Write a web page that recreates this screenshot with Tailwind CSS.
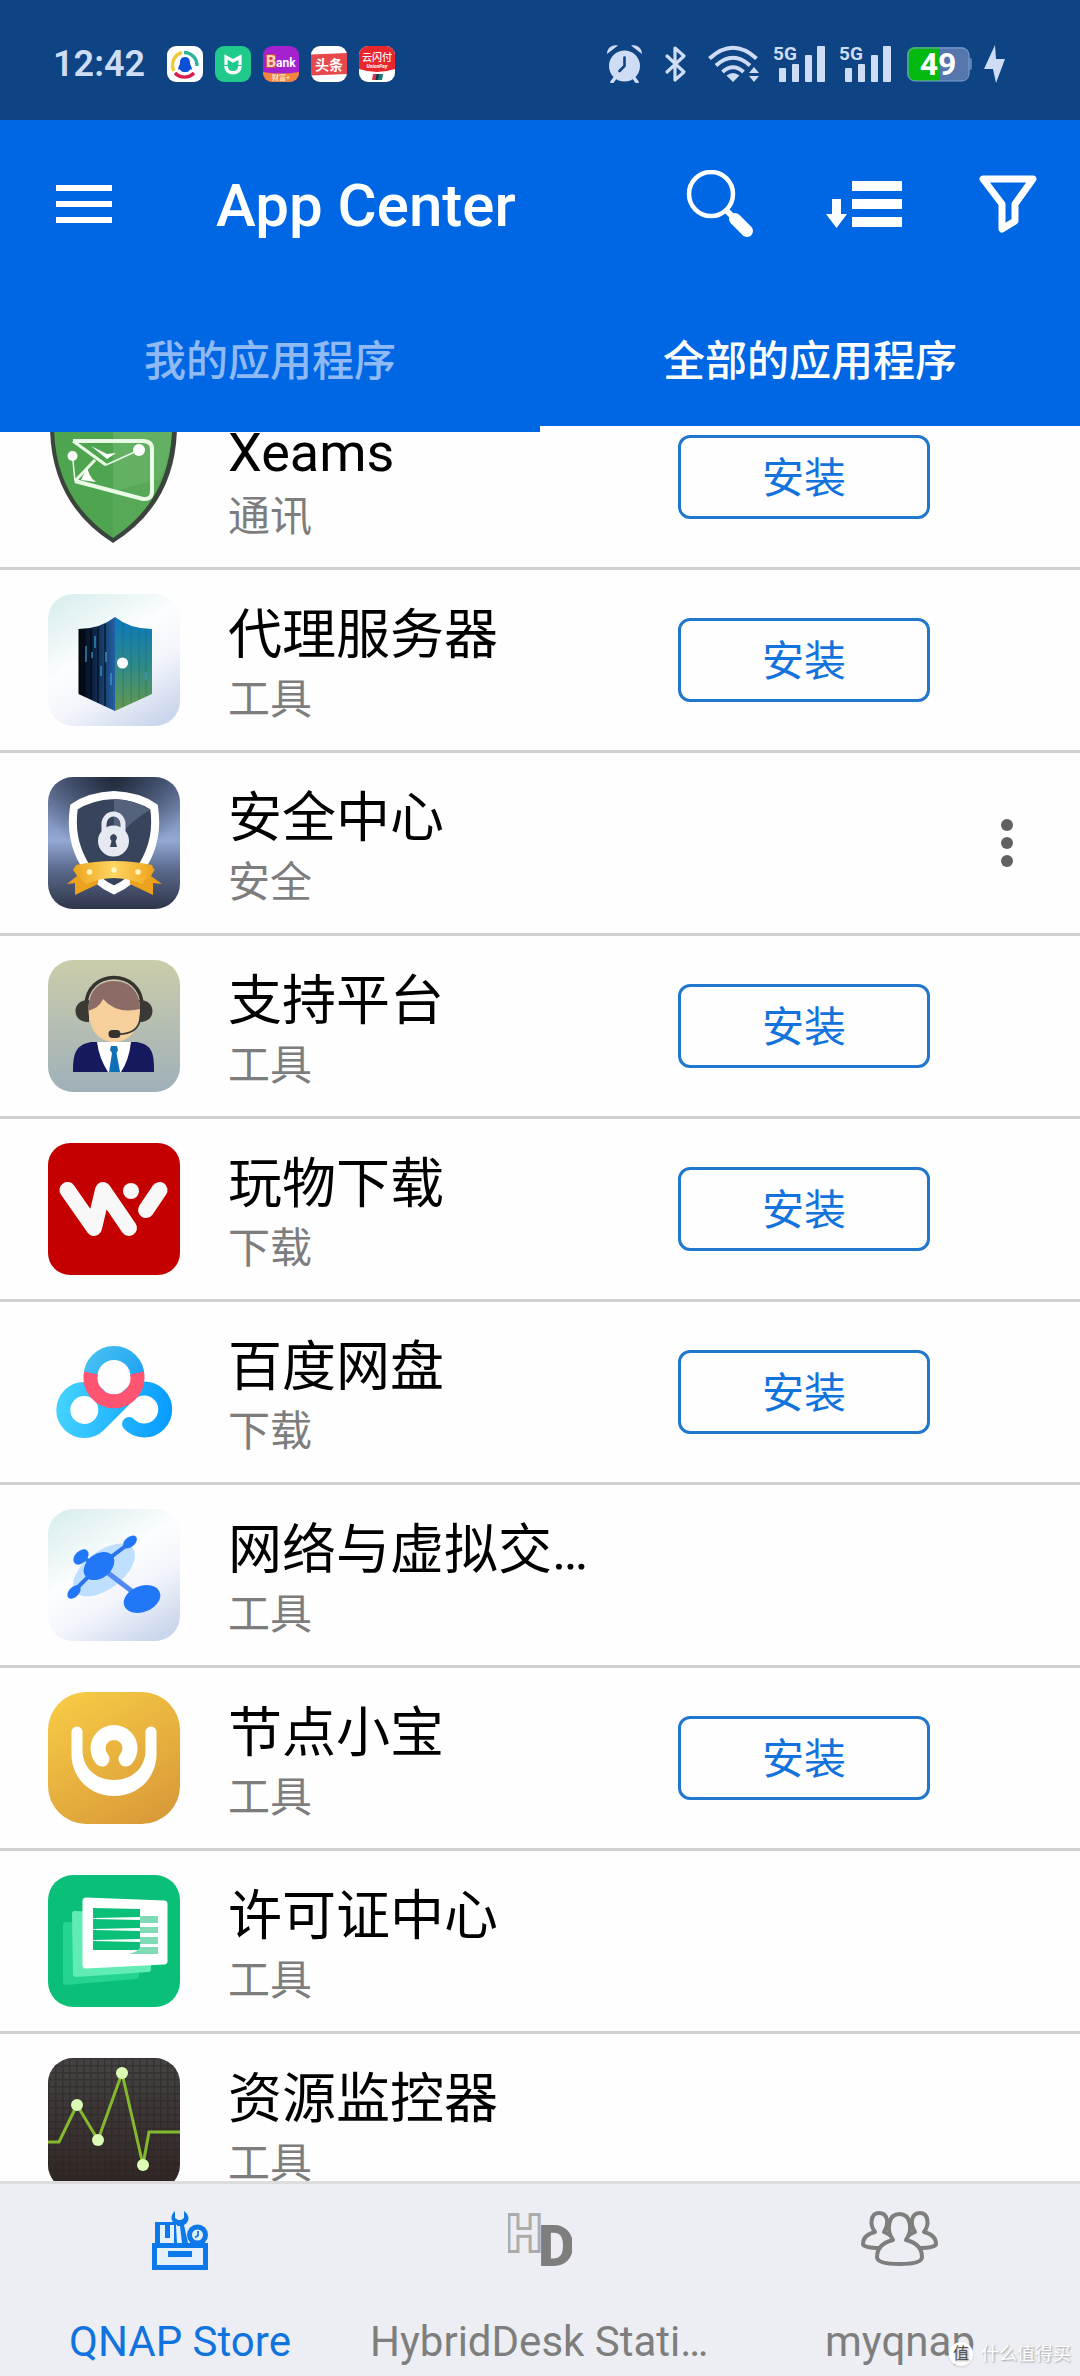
<!DOCTYPE html>
<html lang="zh-CN">

<head>
  <meta charset="UTF-8" />
  <meta name="viewport" content="width=device-width, initial-scale=1.0" />
  <title>App Center</title>
  <script src="https://cdn.jsdelivr.net/npm/@tailwindcss/browser@4"></script>
</head>

<body class="bg-white">
  <div class="relative w-full h-screen flex flex-col overflow-hidden font-[Roboto,'Noto_Sans_CJK_SC',sans-serif]">
    <!-- status bar -->
    <div class="flex shrink-0 items-center justify-between h-[120px] pt-2 pl-[53px] pr-[75px] bg-[#0e4384] text-[#cfdcf5]">
      <div class="flex items-center gap-[22px]">
        <span class="text-4xl font-semibold">12:42</span>
        <div class="flex items-center gap-3">
          <svg class="size-9" viewBox="0 0 36 36">
            <rect width="36" height="36" rx="9" fill="#fff" />
            <g fill="none" stroke-width="3.4">
              <path d="M7 25A13 13 0 0 1 15 6.500" stroke="#f0c93c" />
              <path d="M17 6.500A13 13 0 0 1 30 20" stroke="#2fb39a" />
              <path d="M8 27A13 13 0 0 0 27 27" stroke="#d81e4c" />
            </g>
            <path d="M18 11c4 0 5 3 5 6 0 2 2 4 2 6.500h-2c-1 2-2 2.500-5 2.500s-4-.5-5-2.500h-2c0-2.500 2-4.500 2-6.500 0-3 1-6 5-6z" fill="#0b51d8" />
          </svg>
          <svg class="size-9" viewBox="0 0 36 36">
            <rect width="36" height="36" rx="9" fill="#1fca8a" />
            <path d="M11 19V11l7 4 7-4v8" fill="none" stroke="#fff" stroke-width="3.2" />
            <path d="M11 20c0 9 14 9 14 0" fill="none" stroke="#fff" stroke-width="3.6" />
          </svg>
          <svg class="size-9" viewBox="0 0 36 36">
            <clipPath id="c-bank"><rect width="36" height="36" rx="9" /></clipPath>
            <g clip-path="url(#c-bank)">
              <rect width="36" height="36" fill="#a321cf" />
              <path d="M0 26q18 3 36 0v10H0z" fill="#f0873c" />
              <rect x="3" y="8" width="10" height="14" fill="#e0453c" />
              <text x="3" y="21" font-size="16" font-weight="700" fill="#ffd9c0">B</text>
              <text x="13" y="21" font-size="12" font-weight="700" fill="#fff">ank</text>
              <text x="18" y="34" font-size="7" text-anchor="middle" fill="#fff">财富+</text>
            </g>
          </svg>
          <svg class="size-9" viewBox="0 0 36 36">
            <rect width="36" height="36" rx="9" fill="#fff" />
            <path d="M0 8.500L36 7v21L0 29.500z" fill="#e8484c" />
            <text x="18" y="24" font-size="14" font-weight="700" text-anchor="middle" fill="#fff">头条</text>
          </svg>
          <svg class="size-9" viewBox="0 0 36 36">
            <clipPath id="c-pay"><rect width="36" height="36" rx="9" /></clipPath>
            <g clip-path="url(#c-pay)">
              <rect width="36" height="36" fill="#fff" />
              <path d="M0 0h36v23q-18 6-36 0z" fill="#e8262c" />
              <text x="18" y="15" font-size="10" font-weight="500" text-anchor="middle" fill="#fff">云闪付</text>
              <text x="18" y="22" font-size="5" font-style="italic" font-weight="700" text-anchor="middle" fill="#fff">UnionPay</text>
              <path d="M14 28h4l-1 6h-4z" fill="#d3384a" /><path d="M17.500 28h3l-1 6h-3z" fill="#17304f" /><path d="M20 28h4l-1 6h-4z" fill="#147a70" />
            </g>
          </svg>
        </div>
      </div>
      <div class="flex items-center gap-3">
        <svg class="w-[38px] h-[38px]" viewBox="0 0 38 38" fill="#cfdcf5">
          <circle cx="18.500" cy="21" r="15.500" />
          <path d="M1 9c0-6 5-10 11-8.500zM36 9c0-6-5-10-11-8.500z" />
          <path d="M9 33l-3 4M28 33l3 4" stroke="#cfdcf5" stroke-width="3.500" stroke-linecap="round" />
          <path d="M18.500 12.500v8.500l-5 5" fill="none" stroke="#0e4384" stroke-width="2.600" stroke-linecap="round" />
        </svg>
        <svg class="w-10 h-[38px]" viewBox="0 0 40 38" fill="none" stroke="#cfdcf5" stroke-width="3.200" stroke-linejoin="round" stroke-linecap="round">
          <path d="M11 11l17 16-9 8V3l9 8L11 27" />
        </svg>
        <svg class="w-[54px] h-[38px]" viewBox="0 0 54 38" fill="none" stroke="#cfdcf5" stroke-width="4">
          <path d="M1.500 13.500Q25 -8 48.500 13.500M8 20.500Q25 5 42 20.500M14.500 27Q25 17.500 35.500 27" />
          <path d="M25 37l-6.500-6.500q6.500-5 13 0z" fill="#cfdcf5" stroke="none" />
          <path d="M46 22l5 6H41zM46 37l5-6H41z" fill="#cfdcf5" stroke="none" />
        </svg>
        <svg class="w-[54px] h-[38px] overflow-visible" viewBox="0 0 54 38" fill="#cfdcf5">
          <text x="-1" y="15" font-size="19" font-weight="700">5G</text>
          <rect x="5" y="23" width="7" height="14" rx="1" /><rect x="18" y="19" width="7" height="18" rx="1" /><rect x="31" y="10" width="7" height="27" rx="1" /><rect x="43" y="1" width="8" height="36" rx="1" />
        </svg>
        <svg class="w-[54px] h-[38px] overflow-visible" viewBox="0 0 54 38" fill="#cfdcf5">
          <text x="-1" y="15" font-size="19" font-weight="700">5G</text>
          <rect x="5" y="23" width="7" height="14" rx="1" /><rect x="18" y="19" width="7" height="18" rx="1" /><rect x="31" y="10" width="7" height="27" rx="1" /><rect x="43" y="1" width="8" height="36" rx="1" />
        </svg>
        <svg class="w-[66px] h-[38px]" viewBox="0 0 66 38">
          <clipPath id="c-bat"><rect x="1" y="2" width="62" height="34" rx="8" /></clipPath>
          <rect x="61" y="13" width="5" height="12" rx="2" fill="#5b7fb3" />
          <g clip-path="url(#c-bat)">
            <rect width="66" height="38" fill="#5577ad" /><rect width="34" height="38" fill="#04b90f" />
          </g>
          <rect x="2" y="3" width="61" height="33" rx="7" fill="none" stroke="#7f9fd0" />
          <text x="32" y="30" font-size="32" font-weight="700" text-anchor="middle" fill="#fff">49</text>
        </svg>
        <svg class="w-[21px] h-[38px]" viewBox="0 0 21 38" fill="#cfdcf5"><path d="M11 0L0 24h9l3 14 9-24h-9z" /></svg>
      </div>
    </div>

    <!-- title bar and tabs -->
    <header class="shrink-0 bg-[#0067e4] text-white">
      <div class="flex items-center h-[168px]">
        <button class="flex w-[168px] h-full items-center justify-center" aria-label="菜单">
          <svg class="w-14 h-[38px]" viewBox="0 0 56 38" fill="#fff"><path d="M0 0h56v6H0zM0 16h56v6H0zM0 32h56v6H0z" /></svg>
        </button>
        <h1 class="flex-1 pl-12 pt-1 text-[60px] leading-[72px] font-medium">App Center</h1>
        <button class="flex w-36 h-full items-center justify-center" aria-label="搜索">
          <svg class="w-[68px] h-[68px]" viewBox="0 0 68 68" fill="none" stroke="#fff">
            <circle cx="25" cy="24" r="22" stroke-width="4.500" />
            <path d="M40 40l6 6" stroke-width="6" />
            <path d="M49 49l12 12" stroke-width="12" stroke-linecap="round" />
          </svg>
        </button>
        <button class="flex w-36 h-full items-center justify-center" aria-label="排序">
          <svg class="w-[76px] h-[48px]" viewBox="0 0 76 48" fill="#fff"><path d="M26 1h50v10H26zM26 19h50v10H26zM26 37h50v10H26zM6 19h9v15h6L10.500 48 0 34h6z" /></svg>
        </button>
        <button class="flex w-36 h-full items-center justify-center" aria-label="筛选">
          <svg class="w-[58px] h-[58px]" viewBox="0 0 58 58" fill="none" stroke="#fff" stroke-width="7" stroke-linejoin="round"><path d="M4 4h50L36 29v17l-13 8V29z" /></svg>
        </button>
      </div>
      <nav class="grid grid-cols-2 h-[144px] text-[42px] font-medium">
        <a href="#" class="flex items-center justify-center border-b-6 border-transparent pt-[9px] text-[#8fbaf5]">我的应用程序</a>
        <a href="#" class="flex items-center justify-center border-b-6 border-white pt-[9px]">全部的应用程序</a>
      </nav>
    </header>

    <!-- app list, scrolled part of a row down -->
    <main class="flex-1 min-h-0 overflow-hidden bg-[#fefefe]">
      <ul class="-mt-[45px] text-black">
        <li class="flex items-center h-[183px] border-b-3 border-[#d0d2d2] pl-12">
          <svg class="size-[132px] shrink-0" viewBox="0 0 132 132">
            <path d="M65 132Q2 92 2 14L65 0l64 14Q129 92 65 132z" fill="#3b443c" />
            <path d="M65 127Q6 88 6 14L65 2z" fill="#4fa44f" />
            <path d="M65 127Q124 88 124 14L65 2z" fill="#57a857" />
            <path d="M65 2L124 14q0 30-12 54L65 80z" fill="#63b062" />
            <g fill="none" stroke="#e9fbe6" stroke-linejoin="round">
              <path d="M25 30H95q9 0 9 8v42q0 9-9 8L27 70" stroke-width="4" />
              <path d="M25 30L58 54" stroke-width="3" />
              <path d="M58 54L91 39M24.500 45L27 70" stroke-width="1.500" />
              <path d="M27 70L47 49" stroke-width="3" />
            </g>
            <path d="M43 35l16 8 9-1-9 6zM39.500 56L33 69l15 2q-8-6-8.500-15z" fill="#fff" />
            <circle cx="24.500" cy="45" r="5" fill="#fff" /><circle cx="91" cy="39" r="6" fill="#fff" />
          </svg>
          <div class="flex-1 min-w-0 pl-12 pt-2">
            <h2 class="text-[54px] leading-[72px] truncate max-w-[360px]">Xeams</h2>
            <p class="text-[42px] leading-[56px] text-[#7d7d7d]">通讯</p>
          </div>
          <button class="w-[252px] h-[84px] mr-[150px] rounded-xl border-3 border-[#2177cb] pt-[3px] text-[42px] leading-[56px] text-[#1273dc]">安装</button>
        </li>
        <li class="flex items-center h-[183px] border-b-3 border-[#d0d2d2] pl-12">
          <svg class="size-[132px] shrink-0" viewBox="0 0 132 132">
            <defs>
              <linearGradient id="g-pale" x1="0.200" y1="0" x2="0.800" y2="1"><stop offset="0" stop-color="#dcefef" /><stop offset=".4" stop-color="#fcfdfe" /><stop offset=".65" stop-color="#f3f5fb" /><stop offset="1" stop-color="#cad6ec" /></linearGradient>
              <linearGradient id="g-pl"><stop offset="0" stop-color="#02060d" /><stop offset=".4" stop-color="#0c2240" /><stop offset="1" stop-color="#2360a4" /></linearGradient>
              <linearGradient id="g-pr" x1="0" y1="0" x2="0" y2="1"><stop offset="0" stop-color="#0a78c0" /><stop offset=".5" stop-color="#2d8a8c" /><stop offset="1" stop-color="#66994a" /></linearGradient>
            </defs>
            <rect width="132" height="132" rx="25" fill="url(#g-pale)" />
            <path d="M30.500 35Q52 35 67 23v94L30.500 100z" fill="url(#g-pl)" />
            <path d="M67 23q15 12 37 12v65L67 117z" fill="url(#g-pr)" />
            <path d="M36 36v66M43 35v70M50 33v76M57 30v82" stroke="#000" stroke-width="2" opacity=".45" />
            <path d="M75 29v84M83 33v75M91 35v70M98 36v66" stroke="#1d5d56" stroke-width="1" opacity=".4" />
            <path d="M38 52v16M47 42v12M58 58v10M53 72v10M63 79v12M98 78v8M44 58v6" stroke="#3f9fd0" stroke-width="2" opacity=".6" />
            <circle cx="74.500" cy="69" r="5.500" fill="#fff" />
          </svg>
          <div class="flex-1 min-w-0 pl-12 pt-2">
            <h2 class="text-[54px] leading-[72px] truncate max-w-[360px]">代理服务器</h2>
            <p class="text-[42px] leading-[56px] text-[#7d7d7d]">工具</p>
          </div>
          <button class="w-[252px] h-[84px] mr-[150px] rounded-xl border-3 border-[#2177cb] pt-[3px] text-[42px] leading-[56px] text-[#1273dc]">安装</button>
        </li>
        <li class="flex items-center h-[183px] border-b-3 border-[#d0d2d2] pl-12">
          <svg class="size-[132px] shrink-0" viewBox="0 0 132 132">
            <defs>
              <linearGradient id="g-sec" x1="0" y1="0" x2="0" y2="1"><stop offset="0" stop-color="#56678c" /><stop offset=".48" stop-color="#93a9d4" /><stop offset=".7" stop-color="#5b6a8d" /><stop offset="1" stop-color="#2f3649" /></linearGradient>
              <radialGradient id="g-sec2" cx=".5" cy="0" r=".6"><stop offset="0" stop-color="#20293a" /><stop offset="1" stop-color="#20293a" stop-opacity="0" /></radialGradient>
              <linearGradient id="g-rib"><stop offset="0" stop-color="#eda41d" /><stop offset=".5" stop-color="#ffd561" /><stop offset="1" stop-color="#eda41d" /></linearGradient>
            </defs>
            <rect width="132" height="132" rx="25" fill="url(#g-sec)" />
            <rect width="132" height="132" rx="25" fill="url(#g-sec2)" />
            <path d="M66 18Q42 19 26 30Q21 62 37 88Q48 105 66 113Q84 105 95 88Q111 62 106 30Q90 19 66 18z" fill="#38445c" stroke="#fff" stroke-width="8" />
            <path d="M66 22q21 1 36 11-15 8-36 30z" fill="#55627c" />
            <path d="M56 54V47a9.500 10 0 0 1 19 0v7" fill="none" stroke="#e6e9f2" stroke-width="5" />
            <circle cx="65.500" cy="64" r="15.500" fill="#e6e9f2" />
            <path d="M65.500 57a4 4 0 0 1 2 7l1.500 6h-7l1.500-6a4 4 0 0 1 2-7z" fill="#38445c" />
            <path d="M25 92l4 7-10 8 8-1v12l23-11 1-14zM107 92l-4 7 11 8-9-1v12l-23-11-1-14z" fill="#eca21d" />
            <path d="M28 88Q66 80 104 88l2 5-12 14q-28-12-56 0L25 93z" fill="url(#g-rib)" />
            <circle cx="41.500" cy="95" r="2.800" fill="#fff3c0" /><circle cx="66" cy="93" r="2.800" fill="#fff3c0" /><circle cx="90" cy="95" r="2.800" fill="#fff3c0" />
          </svg>
          <div class="flex-1 min-w-0 pl-12 pt-2">
            <h2 class="text-[54px] leading-[72px] truncate max-w-[360px]">安全中心</h2>
            <p class="text-[42px] leading-[56px] text-[#7d7d7d]">安全</p>
          </div>
          <button class="flex w-[146px] h-full items-center justify-center" aria-label="更多">
            <svg class="w-3 h-12" viewBox="0 0 12 48" fill="#616161"><circle cx="6" cy="6" r="6" /><circle cx="6" cy="24" r="6" /><circle cx="6" cy="42" r="6" /></svg>
          </button>
        </li>
        <li class="flex items-center h-[183px] border-b-3 border-[#d0d2d2] pl-12">
          <svg class="size-[132px] shrink-0" viewBox="0 0 132 132">
            <defs>
              <linearGradient id="g-sup" x1="0" y1="0" x2="0" y2="1"><stop offset="0" stop-color="#cbcca9" /><stop offset="1" stop-color="#9fb0b9" /></linearGradient>
              <clipPath id="c-face"><path d="M66 21c17 0 26 12 26 28 0 18-9 33-26 33S40.500 67 40.500 49C40.500 33 49 21 66 21z" /></clipPath>
            </defs>
            <rect width="132" height="132" rx="25" fill="url(#g-sup)" />
            <path d="M25 112c0-18 2-27 18-30h46c16 3 17 12 17 30z" fill="#17195f" />
            <path d="M49 82h34q-2 18-10 30H60Q51 98 49 82z" fill="#fff" />
            <path d="M63 86h6l1 4-1.500 3 3.500 19H61l3-19-2-3z" fill="#0f70b5" />
            <path d="M38 46c0-38 56-38 56 0" fill="none" stroke="#35342f" stroke-width="3.500" />
            <path d="M41 40v22c-18 1-18-23 0-22zM91 40v22c18 1 18-23 0-22z" fill="#3a3935" />
            <g clip-path="url(#c-face)">
              <rect x="38" y="20" width="58" height="64" fill="#f6cf9b" />
              <path d="M38 18h58v30q-26 8-41-9-4 10-17 12z" fill="#8b6b66" />
            </g>
            <path d="M92 60q-3 14-21 14" fill="none" stroke="#3a3935" stroke-width="1.600" />
            <rect x="60.500" y="70" width="12" height="8" rx="4" fill="#33322e" />
          </svg>
          <div class="flex-1 min-w-0 pl-12 pt-2">
            <h2 class="text-[54px] leading-[72px] truncate max-w-[360px]">支持平台</h2>
            <p class="text-[42px] leading-[56px] text-[#7d7d7d]">工具</p>
          </div>
          <button class="w-[252px] h-[84px] mr-[150px] rounded-xl border-3 border-[#2177cb] pt-[3px] text-[42px] leading-[56px] text-[#1273dc]">安装</button>
        </li>
        <li class="flex items-center h-[183px] border-b-3 border-[#d0d2d2] pl-12">
          <svg class="size-[132px] shrink-0" viewBox="0 0 132 132">
            <rect width="132" height="132" rx="22" fill="#c40000" />
            <g fill="none" stroke="#f8f8f8" stroke-width="16" stroke-linecap="round" stroke-linejoin="round">
              <path d="M19.500 47L46 85l9-38 26 38" /><path d="M111.500 47L98 67" />
            </g>
            <circle cx="83" cy="48" r="8" fill="#f8f8f8" />
          </svg>
          <div class="flex-1 min-w-0 pl-12 pt-2">
            <h2 class="text-[54px] leading-[72px] truncate max-w-[360px]">玩物下载</h2>
            <p class="text-[42px] leading-[56px] text-[#7d7d7d]">下载</p>
          </div>
          <button class="w-[252px] h-[84px] mr-[150px] rounded-xl border-3 border-[#2177cb] pt-[3px] text-[42px] leading-[56px] text-[#1273dc]">安装</button>
        </li>
        <li class="flex items-center h-[183px] border-b-3 border-[#d0d2d2] pl-12">
          <svg class="size-[132px] shrink-0" viewBox="0 0 132 132" fill="none">
            <defs>
              <linearGradient id="g-bd" gradientUnits="userSpaceOnUse" x1="8" y1="70" x2="124" y2="84"><stop offset="0" stop-color="#45d4ff" /><stop offset="1" stop-color="#089bff" /></linearGradient>
              <linearGradient id="g-bd2" gradientUnits="userSpaceOnUse" x1="36" y1="20" x2="96" y2="50"><stop offset="0" stop-color="#4cc4f2" /><stop offset="1" stop-color="#1fa2f2" /></linearGradient>
            </defs>
            <path d="M81 98A21 21 0 1 0 81 69L51 99A21 21 0 1 1 51 69A21 21 0 0 1 51 99" stroke="url(#g-bd)" stroke-width="14" stroke-linecap="round" stroke-linejoin="round" />
            <path d="M42.500 50.500a23.500 23.500 0 0 1 47 0" stroke="url(#g-bd2)" stroke-width="14" />
            <path d="M43 47a23.500 23.500 0 1 0 46 0" stroke="#ff5573" stroke-width="14" />
          </svg>
          <div class="flex-1 min-w-0 pl-12 pt-2">
            <h2 class="text-[54px] leading-[72px] truncate max-w-[360px]">百度网盘</h2>
            <p class="text-[42px] leading-[56px] text-[#7d7d7d]">下载</p>
          </div>
          <button class="w-[252px] h-[84px] mr-[150px] rounded-xl border-3 border-[#2177cb] pt-[3px] text-[42px] leading-[56px] text-[#1273dc]">安装</button>
        </li>
        <li class="flex items-center h-[183px] border-b-3 border-[#d0d2d2] pl-12">
          <svg class="size-[132px] shrink-0" viewBox="0 0 132 132" fill="#2277f8">
            <rect width="132" height="132" rx="25" fill="url(#g-pale)" />
            <ellipse cx="56" cy="61" rx="36" ry="19" transform="rotate(-37 56 61)" fill="#bfdffe" />
            <path d="M51 57L94 90" stroke="#5289f3" stroke-width="5" />
            <path d="M83 33L51 57 25 83M33 48l18 9" stroke="#2c74ea" stroke-width="4" />
            <ellipse cx="51" cy="57" rx="17" ry="12" transform="rotate(-38 51 57)" />
            <ellipse cx="94" cy="90" rx="19" ry="13" transform="rotate(-22 94 90)" />
            <ellipse cx="82" cy="33" rx="8" ry="5" transform="rotate(-40 82 33)" />
            <ellipse cx="33" cy="48" rx="9" ry="6" transform="rotate(-45 33 48)" />
            <ellipse cx="26" cy="83" rx="8" ry="5" transform="rotate(-45 26 83)" />
          </svg>
          <div class="flex-1 min-w-0 pl-12 pt-2">
            <h2 class="text-[54px] leading-[72px] truncate max-w-[372px]">网络与虚拟交换机</h2>
            <p class="text-[42px] leading-[56px] text-[#7d7d7d]">工具</p>
          </div>
        </li>
        <li class="flex items-center h-[183px] border-b-3 border-[#d0d2d2] pl-12">
          <svg class="size-[132px] shrink-0" viewBox="0 0 132 132">
            <linearGradient id="g-node" x1="0.200" y1="0" x2="0.800" y2="1"><stop offset="0" stop-color="#f6c945" /><stop offset="1" stop-color="#d99a38" /></linearGradient>
            <rect width="132" height="132" rx="38" fill="url(#g-node)" />
            <path d="M23.500 40a5.500 5.500 0 0 1 11 0V58C34.500 76 48 88 66 88S97.500 76 97.500 58V40a5.500 5.500 0 0 1 11 0V62C108.500 86 90 104 66 104S23.500 86 23.500 62z" fill="#fff" />
            <path d="M54 67A16 16 0 1 1 78 67" fill="none" stroke="#fff" stroke-width="15" stroke-linecap="round" />
          </svg>
          <div class="flex-1 min-w-0 pl-12 pt-2">
            <h2 class="text-[54px] leading-[72px] truncate max-w-[360px]">节点小宝</h2>
            <p class="text-[42px] leading-[56px] text-[#7d7d7d]">工具</p>
          </div>
          <button class="w-[252px] h-[84px] mr-[150px] rounded-xl border-3 border-[#2177cb] pt-[3px] text-[42px] leading-[56px] text-[#1273dc]">安装</button>
        </li>
        <li class="flex items-center h-[183px] border-b-3 border-[#d0d2d2] pl-12">
          <svg class="size-[132px] shrink-0" viewBox="0 0 132 132" stroke-linejoin="round">
            <rect width="132" height="132" rx="25" fill="#0abf78" />
            <path d="M18 50l70 4v47l-70 6z" fill="#25d48e" stroke="#25d48e" stroke-width="6" />
            <path d="M27 39l73 4v51l-72 5z" fill="#60ecb4" stroke="#60ecb4" stroke-width="6" />
            <path d="M38 26l78 3v57l-78 4z" fill="#fff" stroke="#fff" stroke-width="7" />
            <path d="M45 33l47 1v8l-47 1zM45 44l47 1v8l-47 1zM45 55l47 1v8l-47 1zM45 66l47 1v8H45z" fill="#0abf78" />
            <path d="M92 41h18v7H92zM92 52h18v6H92zM92 62h18v7H92zM92 72h18v7H81q10-3 11-7z" fill="#7fdbb6" />
          </svg>
          <div class="flex-1 min-w-0 pl-12 pt-2">
            <h2 class="text-[54px] leading-[72px] truncate max-w-[360px]">许可证中心</h2>
            <p class="text-[42px] leading-[56px] text-[#7d7d7d]">工具</p>
          </div>
        </li>
        <li class="flex items-center h-[183px] border-b-3 border-[#d0d2d2] pl-12">
          <svg class="size-[132px] shrink-0" viewBox="0 0 132 132">
            <defs>
              <pattern id="p-grid" width="7" height="7" patternUnits="userSpaceOnUse"><path d="M0 0h7M0 0v7" stroke="#272322" stroke-width="3" /></pattern>
              <linearGradient id="g-mon" x1="0" y1="0" x2="0" y2="1"><stop offset="0" stop-color="#454343" /><stop offset="1" stop-color="#302523" /></linearGradient>
            </defs>
            <rect width="132" height="132" rx="25" fill="url(#g-mon)" />
            <rect width="132" height="132" rx="25" fill="url(#p-grid)" opacity=".5" />
            <path d="M0 84h11L29 47 50 82 74 15 95 107l6-33h31" fill="none" stroke="#84b92d" stroke-width="3" />
            <g fill="#dcfcb6"><circle cx="29" cy="47" r="6" /><circle cx="50" cy="82" r="6" /><circle cx="74" cy="15" r="6" /><circle cx="95" cy="107" r="6" /></g>
          </svg>
          <div class="flex-1 min-w-0 pl-12 pt-2">
            <h2 class="text-[54px] leading-[72px] truncate max-w-[360px]">资源监控器</h2>
            <p class="text-[42px] leading-[56px] text-[#7d7d7d]">工具</p>
          </div>
        </li>
      </ul>
    </main>

    <!-- bottom navigation -->
    <nav class="grid grid-cols-3 shrink-0 h-[195px] border-t-3 border-[#dcdcdc] bg-[#eceef3] pt-[26px] text-[42px] leading-[56px] text-[#7e7e7e]">
      <a href="#" class="flex flex-col items-center gap-11 min-w-0 text-[#1173dd]">
        <svg class="w-14 h-[60px] shrink-0" viewBox="0 0 56 60" fill="#0c78ea">
          <path d="M0 33h56v27H0z" /><path d="M5 38h46v17H5z" fill="#e4f0fc" /><path d="M16 41h24v6H16z" />
          <path d="M3 12h21v22H3z" /><path d="M8 15h5v18H8zM18 15h4v18h-4zM13 28h5v5h-5z" fill="#e4f0fc" />
          <path d="M23 1c-5 4-5 11 2 14l-1 18h12L32 15c6-3 6-10 0-14v7l-3 2h-3l-3-2z" />
          <path d="M25 16h3l2 17h-5z" fill="#e4f0fc" />
          <circle cx="45.500" cy="25" r="10.500" /><circle cx="45.500" cy="25" r="5.500" fill="#e4f0fc" />
          <path d="M46 21v4.500l-3 2" fill="none" stroke="#0c78ea" stroke-width="1.800" />
        </svg>
        <span class="max-w-[340px] truncate">QNAP Store</span>
      </a>
      <a href="#" class="flex flex-col items-center gap-11 min-w-0">
        <svg class="w-16 h-[60px] shrink-0" viewBox="0 0 64 60">
          <text x="-1" y="40" font-size="48" font-weight="500" fill="#eceef3" stroke="#ababab" stroke-width="6" paint-order="stroke">H</text>
          <text x="30" y="56" font-size="57" font-weight="900" fill="#7e7e7e">D</text>
        </svg>
        <span class="max-w-[340px] truncate">HybridDesk Station</span>
      </a>
      <a href="#" class="flex flex-col items-center gap-11 min-w-0">
        <svg class="w-[78px] h-[60px] shrink-0" viewBox="0 0 78 60" fill="#eceef3" stroke="#7e7e7e" stroke-width="4" stroke-linejoin="round">
          <path d="M14 22C8 14 10 3 18 3s11 9 5 19q10 4 12 10L20 38Q2 38 2 34 2 25 14 22z" />
          <path d="M63 22C69 14 67 3 59 3s-11 9-5 19q-10 4-12 10l15 6Q75 38 75 34 75 25 63 22z" />
          <path d="M32 30C25 20 27 4 38.500 4S52 20 45 30Q61 34 61 47 61 54 38.500 54T16 47Q16 34 32 30z" />
        </svg>
        <span class="max-w-[340px] truncate">myqnap</span>
      </a>
    </nav>

    <!-- site watermark -->
    <div class="absolute right-[9px] bottom-2 flex items-center gap-2 text-lg text-white [text-shadow:1px_1px_2px_#999]">
      <span class="flex size-6 items-center justify-center rounded-full bg-white text-base text-[#555] shadow">值</span>
      <span>什么值得买</span>
    </div>
  </div>
</body>

</html>
